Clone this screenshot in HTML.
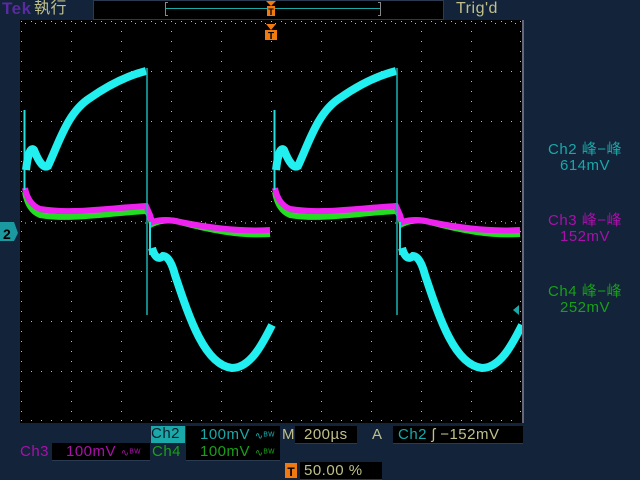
<!DOCTYPE html>
<html><head><meta charset="utf-8"><style>
body{margin:0;width:640px;height:480px;background:#12233a;overflow:hidden;position:relative;font-family:"Liberation Sans","Noto Sans CJK JP",sans-serif;}
.t{position:absolute;font-size:15px;line-height:16px;white-space:nowrap;letter-spacing:0.5px;}
.box{position:absolute;background:#000;border-bottom:1px solid #2a3a50;}
</style></head><body>
<div class="t" style="left:2px;top:1px;color:#5a2aa0;font-size:17px;font-weight:bold;">Tek</div>
<div class="t" style="left:34px;top:1px;color:#c0c08a;font-size:16px;">執行</div>
<div class="box" style="left:93px;top:0;width:349px;height:18px;border:1px solid #2a3a50;"></div>
<svg style="position:absolute;left:0;top:0" width="640" height="480">
<rect x="165" y="2" width="1" height="14" fill="#888"/><rect x="165" y="2" width="3" height="1" fill="#888"/><rect x="165" y="15" width="3" height="1" fill="#888"/>
<rect x="380" y="2" width="1" height="14" fill="#888"/><rect x="378" y="2" width="3" height="1" fill="#888"/><rect x="378" y="15" width="3" height="1" fill="#888"/>
<line x1="166" y1="8.5" x2="380" y2="8.5" stroke="#1aa8a8" stroke-width="1"/>
<polygon points="266,1 276,1 271,6" fill="#f07a10"/><rect x="267" y="6" width="8" height="10" fill="#f07a10"/>
<text x="271" y="15" font-size="9" font-weight="bold" text-anchor="middle" fill="#000" font-family="Liberation Sans">T</text>
<rect x="20" y="20" width="504" height="403" fill="#000"/>
<rect x="522" y="20" width="2" height="403" fill="#667"/>
<g stroke="#bbb" stroke-width="1" stroke-dasharray="1 9">
<line x1="21" y1="21.5" x2="521" y2="21.5"/>
<line x1="21" y1="71.5" x2="521" y2="71.5"/><line x1="21" y1="121.5" x2="521" y2="121.5"/><line x1="21" y1="171.5" x2="521" y2="171.5"/><line x1="21" y1="221.5" x2="521" y2="221.5"/><line x1="21" y1="271.5" x2="521" y2="271.5"/><line x1="21" y1="321.5" x2="521" y2="321.5"/><line x1="21" y1="371.5" x2="521" y2="371.5"/><line x1="21" y1="420.5" x2="521" y2="420.5"/>
<line x1="21.5" y1="21" x2="21.5" y2="421"/><line x1="71.5" y1="21" x2="71.5" y2="421"/><line x1="121.5" y1="21" x2="121.5" y2="421"/><line x1="171.5" y1="21" x2="171.5" y2="421"/><line x1="221.5" y1="21" x2="221.5" y2="421"/><line x1="271.5" y1="21" x2="271.5" y2="421"/><line x1="321.5" y1="21" x2="321.5" y2="421"/><line x1="371.5" y1="21" x2="371.5" y2="421"/><line x1="421.5" y1="21" x2="421.5" y2="421"/><line x1="471.5" y1="21" x2="471.5" y2="421"/><line x1="520.5" y1="21" x2="520.5" y2="421"/>
</g>
<g stroke="#bbb" stroke-width="1">
<line x1="21" y1="23.5" x2="521" y2="23.5" stroke-dasharray="1 9" stroke-dashoffset="-4"/>
<line x1="21" y1="223" x2="521" y2="223" stroke-dasharray="1 9" stroke-dashoffset="-4"/>
</g>
<polygon points="266,24 276,24 271,30" fill="#f07a10"/><rect x="265" y="30" width="12" height="10" fill="#f07a10"/>
<text x="271" y="39" font-size="10" font-weight="bold" text-anchor="middle" fill="#000" font-family="Liberation Sans">T</text>
<defs>
<g id="w">
<path d="M146,207 L150,215 L152,222 Q165,216 180,220 C210,228 240,234 270,232" stroke="#22dd22" stroke-width="6" fill="none" transform="translate(0,2)"/>
<path d="M25,190 Q28,208 40,213 C70,218 100,212 146,209" stroke="#22dd22" stroke-width="6" fill="none" transform="translate(0,2)"/>
<path d="M25,188 Q28,204 40,209 C70,214 100,209 146,206 L150,215 L152,222 Q165,218 180,222 C210,228 240,232 270,230" stroke="#ee22ee" stroke-width="6" fill="none"/>
<line x1="24.5" y1="110" x2="24.5" y2="190" stroke="#22e0e0" stroke-width="2"/>
<path d="M26,170 Q29,145 34,150 Q42,170 48,166 C60,140 68,112 90,98 C110,84 130,75 146,71" stroke="#22f0f0" stroke-width="8" fill="none"/>
<line x1="147" y1="68" x2="147" y2="315" stroke="#1ab0b0" stroke-width="1.5"/>
<line x1="150" y1="222" x2="150" y2="255" stroke="#22e0e0" stroke-width="2"/>
<path d="M152,248 Q156,262 163,256 Q170,256 175,275 C190,320 205,365 232,368 C250,368 262,345 272,325" stroke="#22f0f0" stroke-width="8" fill="none"/>
</g>
</defs>
<use href="#w"/>
<g transform="translate(250,0)"><clipPath id="c"><rect x="0" y="20" width="272" height="403"/></clipPath><use href="#w" clip-path="url(#c)"/></g>
<polygon points="0,222 14,222 18,233 14,241 0,241" fill="#1a9aa0"/>
<text x="3" y="239" font-size="14" font-weight="bold" fill="#000" font-family="Liberation Sans">2</text>
<polygon points="513,310 519,305 519,315" fill="#1aa8a8"/>
<rect x="285" y="463" width="12" height="15" fill="#f07a10"/>
<text x="291" y="476" font-size="12" font-weight="bold" text-anchor="middle" fill="#000" font-family="Liberation Sans">T</text>
</svg>
<div class="t" style="left:456px;top:1px;color:#c0c08a;font-size:16px;">Trig'd</div>
<div class="t" style="left:540px;top:142px;color:#1aa8a8;text-align:center;width:90px;">Ch2 峰−峰<br>614mV</div>
<div class="t" style="left:540px;top:213px;color:#aa10aa;text-align:center;width:90px;">Ch3 峰−峰<br>152mV</div>
<div class="t" style="left:540px;top:284px;color:#18a018;text-align:center;width:90px;">Ch4 峰−峰<br>252mV</div>
<div class="t" style="left:151px;top:426px;width:34px;height:17px;background:#1aa8a8;color:#0a2030;">Ch2</div>
<div class="box" style="left:186px;top:426px;width:94px;height:17px;"></div>
<div class="t" style="left:200px;top:427px;color:#1aa8a8;">100mV <span style="font-size:10px">∿ᴮᵂ</span></div>
<div class="t" style="left:282px;top:427px;color:#c0c08a;">M</div>
<div class="box" style="left:295px;top:426px;width:62px;height:17px;"></div>
<div class="t" style="left:304px;top:427px;color:#c0c08a;">200µs</div>
<div class="t" style="left:372px;top:427px;color:#c0c08a;">A</div>
<div class="box" style="left:393px;top:426px;width:130px;height:17px;"></div>
<div class="t" style="left:398px;top:427px;color:#1aa8a8;">Ch2 <span style="color:#c0c08a">ʃ −152mV</span></div>
<div class="t" style="left:20px;top:444px;color:#aa10aa;">Ch3</div>
<div class="box" style="left:52px;top:443px;width:98px;height:17px;"></div>
<div class="t" style="left:66px;top:444px;color:#aa10aa;">100mV <span style="font-size:10px">∿ᴮᵂ</span></div>
<div class="t" style="left:152px;top:444px;color:#18a018;">Ch4</div>
<div class="box" style="left:186px;top:443px;width:94px;height:17px;"></div>
<div class="t" style="left:200px;top:444px;color:#18a018;">100mV <span style="font-size:10px">∿ᴮᵂ</span></div>
<div class="box" style="left:300px;top:462px;width:82px;height:17px;"></div>
<div class="t" style="left:304px;top:463px;color:#c0c08a;">50.00 %</div>
</body></html>
